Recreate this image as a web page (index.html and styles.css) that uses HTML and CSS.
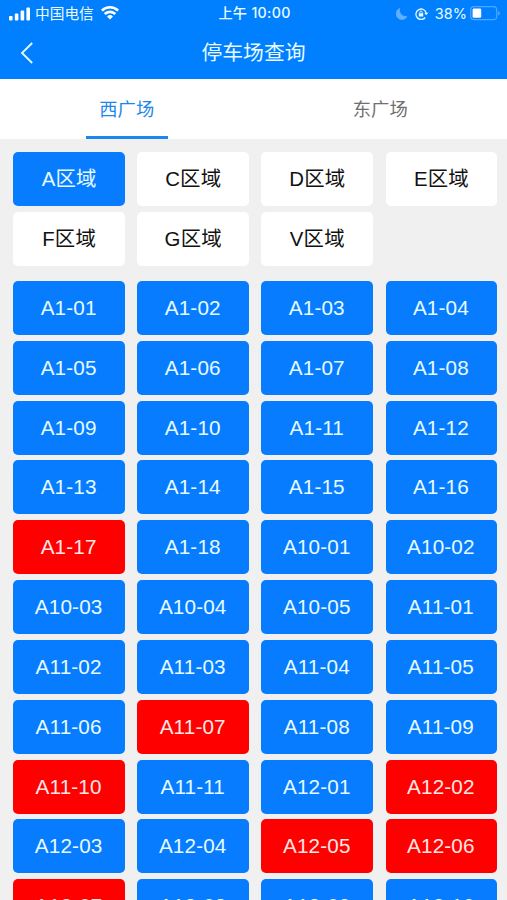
FILE: index.html
```
<!DOCTYPE html>
<html lang="zh-CN">
<head>
<meta charset="utf-8">
<title>停车场查询</title>
<link rel="stylesheet" href="styles.css">
</head>
<body>
<header class="header">
  <div class="status">
    <div class="status-left">
      <svg class="signal" width="22" height="14" viewBox="0 0 22 14" fill="#fff"><rect x="0" y="9" width="3.6" height="4.5" rx="1"/><rect x="5.8" y="6.5" width="3.6" height="7" rx="1"/><rect x="11.6" y="3.5" width="3.6" height="10" rx="1"/><rect x="17.4" y="0.5" width="3.6" height="13" rx="1"/></svg>
      <span class="carrier">中国电信</span>
      <svg class="wifi" width="18" height="14" viewBox="0 0 18 14" fill="none" stroke="#fff" stroke-width="2.6"><path d="M.9 4.6a11.6 11.6 0 0 1 16.2 0M3.7 8a7.6 7.6 0 0 1 10.6 0"/><path d="M9 13.4 6 10.4a4.3 4.3 0 0 1 6 0z" fill="#fff" stroke="none"/></svg>
    </div>
    <div class="clock">上午 10:00</div>
    <div class="status-right">
      <svg class="moon" width="11" height="12" viewBox="0 0 11 12"><path d="M3.6.5C-.4 2.400-.9 7.200 2 9.900c2.700 2.500 7.400 2 9-1.500C6.500 9.300 2.600 5.600 3.600.5z" fill="#62b0ff" stroke="#62b0ff" stroke-width=".8"/></svg>
      <svg class="lock" width="14" height="12" viewBox="0 0 14 12" fill="none" stroke="#e4fbff" stroke-width="1.3"><path d="M10.2 9.500A5.200 5.200 0 1 1 11.200 5"/><path d="m9.300 4.800 1.900 2.400L13.300 4.800z" fill="#e4fbff" stroke="none"/><rect x="3.800" y="5.200" width="4.400" height="3.300" fill="#e4fbff" stroke="none"/><path d="M4.700 5.500V4.400a1.300 1.300 0 0 1 2.600 0v1.100" stroke-width=".9"/></svg>
      <span class="percent">38%</span>
      <svg class="battery" width="30" height="15" viewBox="0 0 30 15"><rect x=".7" y=".7" width="26" height="13" rx="3.2" fill="none" stroke="#4ea8ff" stroke-width="1.2"/><rect x="2.6" y="2.6" width="8.6" height="9.2" rx="1.4" fill="#fff"/><path d="M28 5v4.6q1.9-.8 1.9-2.3T28 5z" fill="#4ea8ff"/></svg>
    </div>
  </div>
  <div class="navbar">
    <svg class="back" width="14" height="22" viewBox="0 0 14 22" fill="none" stroke="#e4fbff" stroke-width="1.8"><path d="M12.2 1 2 11l10.2 10"/></svg>
    <h1 class="title">停车场查询</h1>
  </div>
</header>
<nav class="tabs">
  <div class="tab"><span class="tab-label active">西广场</span></div>
  <div class="tab"><span class="tab-label">东广场</span></div>
</nav>
<main>
  <section class="grid areas">
    <div class="tile selected">A区域</div><div class="tile">C区域</div><div class="tile">D区域</div><div class="tile">E区域</div>
    <div class="tile">F区域</div><div class="tile">G区域</div><div class="tile">V区域</div>
  </section>
  <section class="grid spaces">
    <div class="tile free">A1-01</div><div class="tile free">A1-02</div><div class="tile free">A1-03</div><div class="tile free">A1-04</div>
    <div class="tile free">A1-05</div><div class="tile free">A1-06</div><div class="tile free">A1-07</div><div class="tile free">A1-08</div>
    <div class="tile free">A1-09</div><div class="tile free">A1-10</div><div class="tile free">A1-11</div><div class="tile free">A1-12</div>
    <div class="tile free">A1-13</div><div class="tile free">A1-14</div><div class="tile free">A1-15</div><div class="tile free">A1-16</div>
    <div class="tile taken">A1-17</div><div class="tile free">A1-18</div><div class="tile free">A10-01</div><div class="tile free">A10-02</div>
    <div class="tile free">A10-03</div><div class="tile free">A10-04</div><div class="tile free">A10-05</div><div class="tile free">A11-01</div>
    <div class="tile free">A11-02</div><div class="tile free">A11-03</div><div class="tile free">A11-04</div><div class="tile free">A11-05</div>
    <div class="tile free">A11-06</div><div class="tile taken">A11-07</div><div class="tile free">A11-08</div><div class="tile free">A11-09</div>
    <div class="tile taken">A11-10</div><div class="tile free">A11-11</div><div class="tile free">A12-01</div><div class="tile taken">A12-02</div>
    <div class="tile free">A12-03</div><div class="tile free">A12-04</div><div class="tile taken">A12-05</div><div class="tile taken">A12-06</div>
    <div class="tile taken">A12-07</div><div class="tile free">A12-08</div><div class="tile free">A12-09</div><div class="tile free">A12-10</div>
  </section>
</main>
</body>
</html>
```
FILE: styles.css
```
* { box-sizing: border-box; }
body {
  margin: 0;
  height: 900px;
  overflow: hidden;
  background: #f0f0f0;
  font-family: "Liberation Sans", "Noto Sans CJK SC", sans-serif;
}
svg { display: block; flex: none; }
.header { height: 79px; background: #0080ff; color: #e9fbff; }
.status {
  display: grid;
  grid-template-columns: 1fr auto 1fr;
  align-items: center;
  height: 27px;
  padding: 0 7px 0 9px;
  font-size: 14.7px;
  line-height: 27px;
}
.status-left, .status-right { display: flex; align-items: center; height: 27px; }
.carrier { margin: 1px 7px 0 4px; }
.wifi { margin-bottom: 1px; }
.clock { height: 27px; line-height: 26px; font-family: Inter, "Noto Sans CJK SC", sans-serif; font-size: 14.2px; font-weight: 500; letter-spacing: .3px; }
.status-right { justify-content: flex-end; }
.lock { margin-left: 8px; }
.percent { margin: 0 3px 0 6px; font-family: Inter, sans-serif; font-size: 14.5px; }
.battery { margin-bottom: 1px; }
.navbar { display: grid; grid-template-columns: 50px 1fr 50px; align-items: center; height: 51px; }
.back { margin-left: 20px; }
.title { margin: 0; text-align: center; font-size: 20.8px; font-weight: 400; line-height: 30px; }
.tabs { display: flex; height: 60px; background: #fff; }
.tab { flex: 1; display: flex; justify-content: center; }
.tab-label { width: 82px; height: 60px; text-align: center; font-size: 18.3px; line-height: 62px; color: #707070; }
.tab-label.active { color: #1c86ee; border-bottom: 3px solid #1c86ee; }
.grid {
  display: grid;
  grid-template-columns: repeat(4, 111.7px);
  grid-auto-rows: 54px;
  column-gap: 12.4px;
  row-gap: 5.85px;
  padding-left: 13.3px;
}
.areas { padding-top: 13.4px; }
.spaces { padding-top: 14.6px; }
.tile {
  display: flex;
  align-items: center;
  justify-content: center;
  border-radius: 5px;
  background: #fff;
  color: #111;
  font-size: 20.7px;
  letter-spacing: .15px;
}
.spaces .tile { padding-right: 1px; }
.areas .tile { padding-bottom: 4px; font-size: 20.4px; letter-spacing: .2px; }
.areas .selected { background: #087cff; color: #e4fbff; }
.free { background: #087cff; color: #e4fbff; }
.taken { background: #f00; color: #ffe6e6; }
```
